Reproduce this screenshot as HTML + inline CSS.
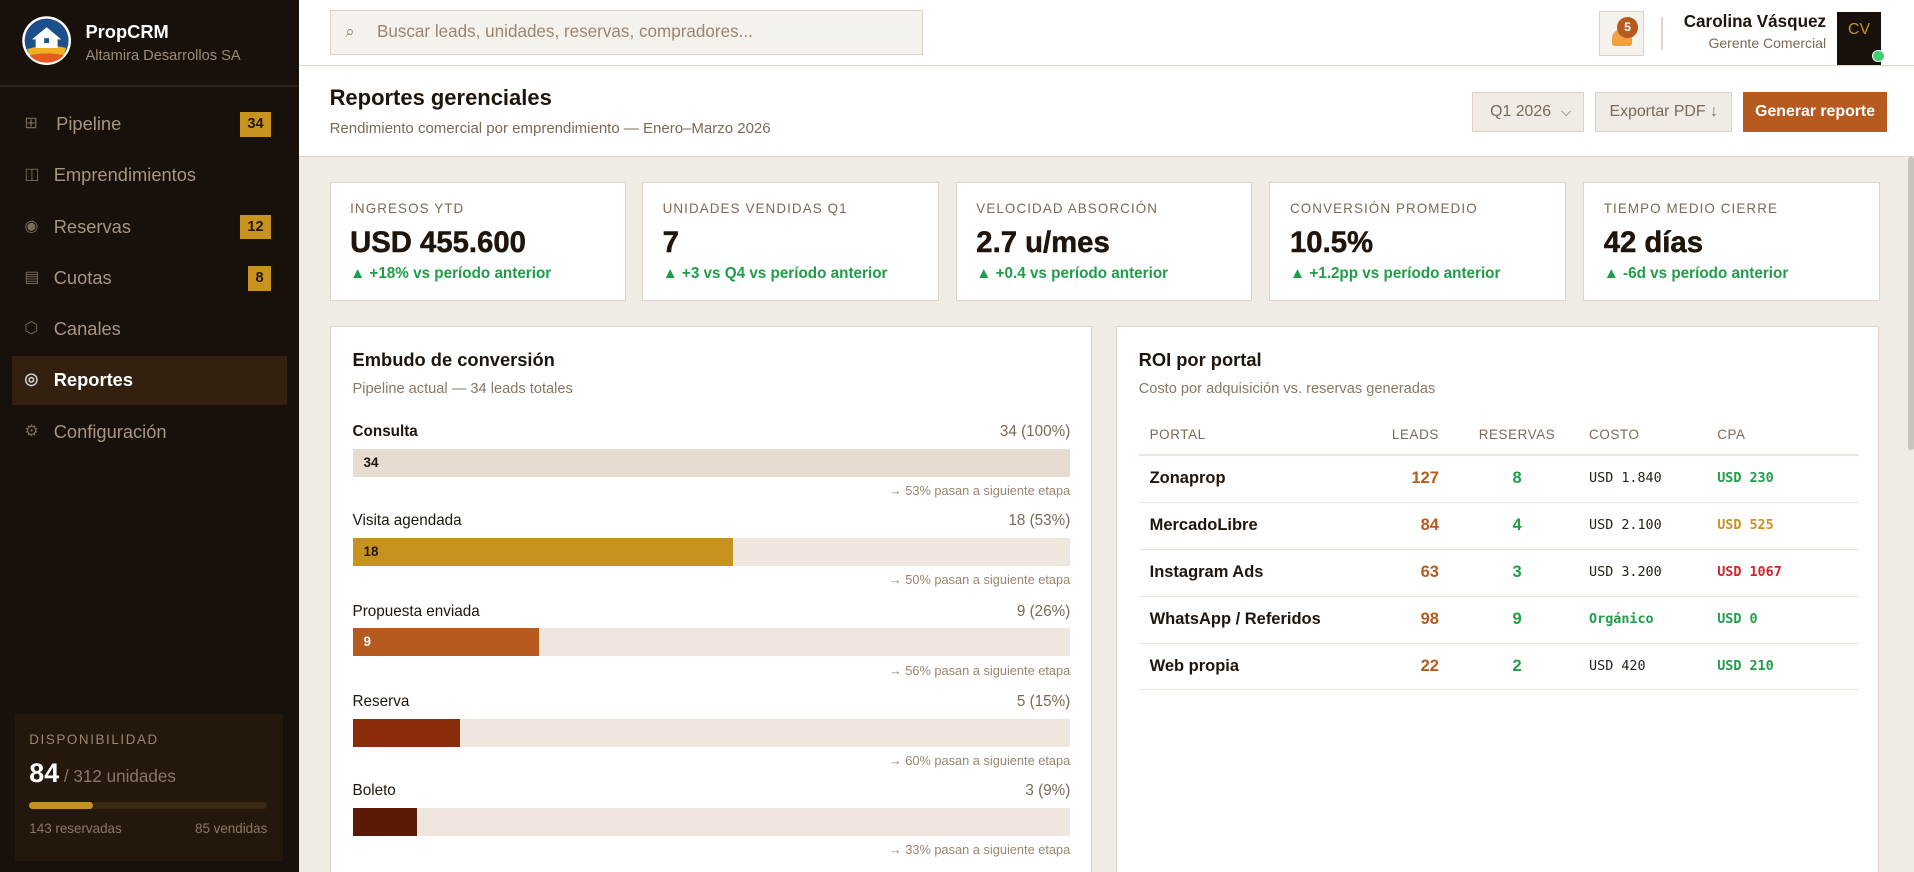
<!DOCTYPE html>
<html><head><meta charset="utf-8">
<style>
*{box-sizing:border-box;margin:0;padding:0}
html,body{width:1914px;height:872px;overflow:hidden;background:#f0ebe4}
#w{zoom:1.22066;width:1568px;height:714px;position:relative;font-family:"Liberation Sans",sans-serif;overflow:hidden;background:#f0ebe4}
.abs{position:absolute}
#sb{left:0;top:0;width:245px;height:714px;background:#18110b}
.nav{position:absolute;left:0;width:245px;height:40px;color:#a89580;font-size:15px;line-height:40px}
.nav .ic{position:absolute;left:20px;top:0;width:14px;color:#7a6a58;font-size:13px}
.nav .t{position:absolute;left:44px}
.badge{position:absolute;top:10px;height:20px;line-height:20px;background:#c8921e;color:#231708;font-size:12px;font-weight:bold;text-align:center;right:23px;padding:0 6px}
#hdr{left:245px;top:0;width:1323px;height:54px;background:#fff;border-bottom:1px solid #e0d6c8}
#ph{left:245px;top:54px;width:1323px;height:75px;background:#fff;border-bottom:1px solid #e0d6c8}
.btn{position:absolute;top:21px;height:33px;line-height:31px;font-size:13px;border:1px solid #ddd2c4;background:#f0ebe4;color:#7a6a58;text-align:center}
.kpi{position:absolute;top:149px;width:243px;height:98px;background:#fff;border:1px solid #e0d6c8}
.kpi .l{position:absolute;left:16px;top:15px;font-size:11px;letter-spacing:.9px;color:#7a6a58}
.kpi .v{position:absolute;left:16px;top:35px;font-size:24px;font-weight:bold;color:#1f150c;-webkit-text-stroke:.4px #1f150c}
.kpi .d{position:absolute;left:16px;top:67px;font-size:12.5px;font-weight:bold;color:#1e9e48}
.panel{position:absolute;top:267px;width:625px;height:460px;background:#fff;border:1px solid #e0d6c8}
.ptitle{position:absolute;left:18px;top:18px;font-size:15px;font-weight:bold;color:#1f150c}
.psub{position:absolute;left:18px;top:44px;font-size:12px;color:#8a7765}
.fr{position:absolute;left:18px;width:588px}
.fr .a{position:absolute;left:0;top:0;font-size:12.5px;color:#1f150c}
.fr .b{position:absolute;right:0;top:0;font-size:12.5px;color:#7a6a58}
.fr .bar{position:absolute;left:0;top:21px;width:588px;height:23px;background:#efe6dd}
.fr .fill{height:23px;font-size:11px;font-weight:bold;line-height:23px;padding-left:9px}
.fr .n{position:absolute;right:0;top:49px;font-size:10.5px;color:#9a8670}
table{position:absolute;left:18px;top:72px;width:590px;border-collapse:collapse}
th{font-size:11px;font-weight:normal;color:#7a6a58;letter-spacing:.5px;text-align:left;height:33px;border-bottom:2px solid #ece5dc;padding:0 9px}
td{height:38.5px;border-bottom:1px solid #ece5dc;padding:0 9px;font-size:13.5px}
td.p{font-weight:bold;color:#1f150c}
td.ld{color:#b65a1f;font-weight:bold;text-align:right;padding-right:14px}
td.rs{color:#1e9e48;font-weight:bold;text-align:center}
td.m{font-family:"DejaVu Sans Mono","Liberation Mono",monospace;font-size:11px;color:#2a2018}
td.g{color:#1e9e48;font-weight:bold}
td.o{color:#c8921e;font-weight:bold}
td.r{color:#d8202a;font-weight:bold}
</style></head><body><div id="w">
<div id="sb" class="abs">
 <svg class="abs" style="left:17px;top:12px" width="42" height="42" viewBox="0 0 42 42">
  <circle cx="21" cy="21" r="20" fill="#fff"/><circle cx="21" cy="21" r="18" fill="#1d4f8a"/>
  <path d="M5 28 Q21 23 37 27 L35 33 Q21 30 7 33Z" fill="#f0b020"/><path d="M7 33 Q21 30 35 33 Q30 39 21 39 Q12 39 7 33Z" fill="#e85a20"/>
  <path d="M9 20 L21 10 L33 20 L30 20 L30 27 L12 27 L12 20Z" fill="#fff"/><rect x="19" y="19" width="4" height="4" fill="#1d4f8a"/>
 </svg>
 <div class="abs" style="left:70px;top:17px;font-size:15px;font-weight:bold;color:#fff">PropCRM</div>
 <div class="abs" style="left:70px;top:39px;font-size:12px;color:#a08a70">Altamira Desarrollos SA</div>
 <div class="abs" style="left:0;top:70px;width:245px;height:1px;background:#2e2216"></div>
 <div class="nav" style="top:82px"><span class="ic">⊞</span><span class="t" style="left:46px">Pipeline</span><span class="badge">34</span></div>
 <div class="nav" style="top:124px"><span class="ic">◫</span><span class="t">Emprendimientos</span></div>
 <div class="nav" style="top:166px"><span class="ic">◉</span><span class="t">Reservas</span><span class="badge">12</span></div>
 <div class="nav" style="top:208px"><span class="ic">▤</span><span class="t">Cuotas</span><span class="badge">8</span></div>
 <div class="nav" style="top:250px"><span class="ic">⬡</span><span class="t">Canales</span></div>
 <div class="abs" style="left:10px;top:292px;width:225px;height:40px;background:#33200f"></div>
 <div class="nav" style="top:292px;color:#fff;font-weight:bold"><span class="ic" style="color:#ccc">◎</span><span class="t">Reportes</span></div>
 <div class="nav" style="top:334px"><span class="ic">⚙</span><span class="t">Configuración</span></div>
 <div class="abs" style="left:12px;top:585px;width:220px;height:120px;background:#24170c">
  <div class="abs" style="left:12px;top:15px;font-size:11px;letter-spacing:1.3px;color:#9a8670">DISPONIBILIDAD</div>
  <div class="abs" style="left:12px;top:36px;color:#8a7765;font-size:14px"><span style="font-size:22px;font-weight:bold;color:#fff">84</span> / 312 unidades</div>
  <div class="abs" style="left:12px;top:72px;width:195px;height:6px;border-radius:3px;background:#3a2814"><div style="width:52px;height:6px;border-radius:3px;background:#c8921e"></div></div>
  <div class="abs" style="left:12px;top:88px;font-size:11px;color:#8a7765">143 reservadas</div>
  <div class="abs" style="right:13px;top:88px;font-size:11px;color:#8a7765">85 vendidas</div>
 </div>
</div>
<div id="hdr" class="abs">
 <div class="abs" style="left:25px;top:8px;width:486px;height:37px;background:#f5f1ec;border:1px solid #ddd2c4">
  <span class="abs" style="left:12px;top:9px;color:#9a8670;font-size:14px">⌕</span>
  <span class="abs" style="left:38px;top:9px;color:#9a8670;font-size:14px">Buscar leads, unidades, reservas, compradores...</span>
 </div>
 <div class="abs" style="left:1065px;top:9px;width:37px;height:37px;background:#f5f1ec;border:1px solid #ddd2c4">
  <div class="abs" style="left:10px;top:14px;width:16px;height:14px;border-radius:8px 8px 2px 2px;background:#f0a040"></div>
  <div class="abs" style="left:14px;top:4px;width:17px;height:17px;border-radius:50%;background:#b65a1f;color:#fff;font-size:10px;font-weight:bold;text-align:center;line-height:17px">5</div>
 </div>
 <div class="abs" style="left:1116px;top:14px;width:1px;height:27px;background:#e0d6c8"></div>
 <div class="abs" style="right:72px;top:10px;font-size:14px;font-weight:bold;color:#1f150c;text-align:right">Carolina Vásquez</div>
 <div class="abs" style="right:72px;top:29px;font-size:11.5px;color:#7a6a58;text-align:right">Gerente Comercial</div>
 <div class="abs" style="left:1260px;top:10px;width:36px;height:43px;background:#18110b;color:#c8921e;font-size:13px;text-align:center;line-height:30px">CV</div>
 <div class="abs" style="left:1289px;top:41px;width:10px;height:10px;border-radius:50%;background:#3ecf70;border:1.5px solid #fff"></div>
</div>
<div id="ph" class="abs">
 <div class="abs" style="left:25px;top:16px;font-size:18px;font-weight:bold;color:#1f150c">Reportes gerenciales</div>
 <div class="abs" style="left:25px;top:44px;font-size:12.3px;color:#7a6a58">Rendimiento comercial por emprendimiento — Enero–Marzo 2026</div>
 <div class="btn" style="left:961px;width:92px;text-align:left;padding-left:14px">Q1 2026 <span style="position:absolute;right:10px;font-size:11px">⌵</span></div>
 <div class="btn" style="left:1062px;width:112px">Exportar PDF ↓</div>
 <div class="btn" style="left:1183px;width:118px;background:#b65a1f;border-color:#b65a1f;color:#fff;font-weight:bold">Generar reporte</div>
</div>
<div class="abs" style="left:1563px;top:129px;width:5px;height:240px;background:#c8c3bc;border-radius:2px"></div>
<div class="kpi" style="left:270px"><div class="l">INGRESOS YTD</div><div class="v">USD 455.600</div><div class="d">▲ +18% vs período anterior</div></div>
<div class="kpi" style="left:526px"><div class="l">UNIDADES VENDIDAS Q1</div><div class="v">7</div><div class="d">▲ +3 vs Q4 vs período anterior</div></div>
<div class="kpi" style="left:783px"><div class="l">VELOCIDAD ABSORCIÓN</div><div class="v">2.7 u/mes</div><div class="d">▲ +0.4 vs período anterior</div></div>
<div class="kpi" style="left:1040px"><div class="l">CONVERSIÓN PROMEDIO</div><div class="v">10.5%</div><div class="d">▲ +1.2pp vs período anterior</div></div>
<div class="kpi" style="left:1297px"><div class="l">TIEMPO MEDIO CIERRE</div><div class="v">42 días</div><div class="d">▲ -6d vs período anterior</div></div>
<div class="panel" style="left:270px">
 <div class="ptitle">Embudo de conversión</div>
 <div class="psub">Pipeline actual — 34 leads totales</div>
 <div class="fr" style="top:79px"><span class="a" style="font-weight:bold">Consulta</span><span class="b">34 (100%)</span><div class="bar"><div class="fill" style="width:588px;background:#e6dccf;color:#1f150c">34</div></div><span class="n">→ 53% pasan a siguiente etapa</span></div>
 <div class="fr" style="top:152px"><span class="a">Visita agendada</span><span class="b">18 (53%)</span><div class="bar"><div class="fill" style="width:312px;background:#c8921e;color:#231708">18</div></div><span class="n">→ 50% pasan a siguiente etapa</span></div>
 <div class="fr" style="top:226px"><span class="a">Propuesta enviada</span><span class="b">9 (26%)</span><div class="bar"><div class="fill" style="width:153px;background:#b65a1f;color:#fff">9</div></div><span class="n">→ 56% pasan a siguiente etapa</span></div>
 <div class="fr" style="top:300px"><span class="a">Reserva</span><span class="b">5 (15%)</span><div class="bar"><div class="fill" style="width:88px;background:#8a2c0a"></div></div><span class="n">→ 60% pasan a siguiente etapa</span></div>
 <div class="fr" style="top:373px"><span class="a">Boleto</span><span class="b">3 (9%)</span><div class="bar"><div class="fill" style="width:53px;background:#5a1a05"></div></div><span class="n">→ 33% pasan a siguiente etapa</span></div>
</div>
<div class="panel" style="left:914px">
 <div class="ptitle">ROI por portal</div>
 <div class="psub">Costo por adquisición vs. reservas generadas</div>
 <table>
  <tr><th style="width:190px">PORTAL</th><th style="width:70px;text-align:right;padding-right:14px">LEADS</th><th style="width:100px;text-align:center">RESERVAS</th><th style="width:105px">COSTO</th><th>CPA</th></tr>
  <tr><td class="p">Zonaprop</td><td class="ld">127</td><td class="rs">8</td><td class="m">USD 1.840</td><td class="m g">USD 230</td></tr>
  <tr><td class="p">MercadoLibre</td><td class="ld">84</td><td class="rs">4</td><td class="m">USD 2.100</td><td class="m o">USD 525</td></tr>
  <tr><td class="p">Instagram Ads</td><td class="ld">63</td><td class="rs">3</td><td class="m">USD 3.200</td><td class="m r">USD 1067</td></tr>
  <tr><td class="p">WhatsApp / Referidos</td><td class="ld">98</td><td class="rs">9</td><td class="m g">Orgánico</td><td class="m g">USD 0</td></tr>
  <tr><td class="p">Web propia</td><td class="ld">22</td><td class="rs">2</td><td class="m">USD 420</td><td class="m g">USD 210</td></tr>
 </table>
</div>
</div></body></html>
